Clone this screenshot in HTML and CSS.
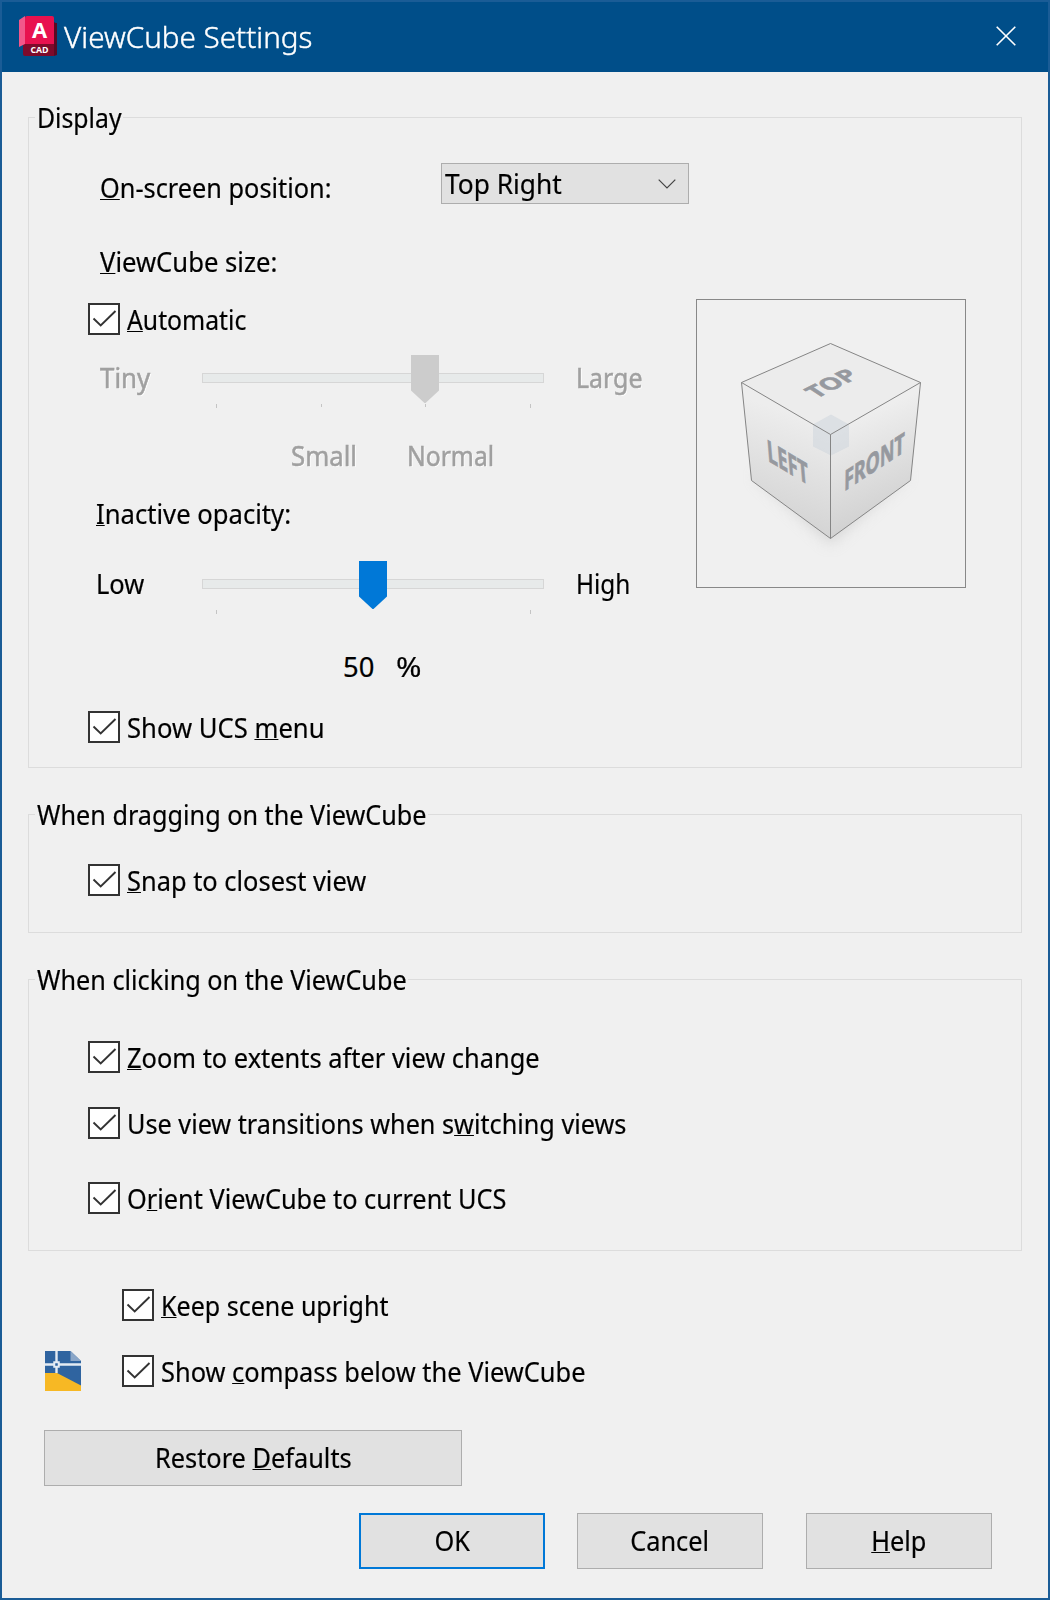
FILE: index.html
```
<!DOCTYPE html>
<html lang="en">
<head>
<meta charset="utf-8">
<title>ViewCube Settings</title>
<link rel="stylesheet" href="styles.css">
</head>
<body>
<svg width="0" height="0" class="defs"><defs>
<symbol id="tick" viewBox="0 0 28 28"><path d="M3.5 13.5 L10.7 20.5 L25.5 6" fill="none" stroke="#333" stroke-width="1.9"/></symbol>
</defs></svg>
<main class="dialog">
  <header class="titlebar">
    <svg class="logo" width="38" height="42" viewBox="0 0 38 42">
      <path d="M4 34h34V8H34L4 30z" fill="#5a0a23"/>
      <path d="M4 29h31v12H6a2 2 0 0 1-2-2z" fill="#7d0a2b"/>
      <path d="M0 5 6 1v28L0 32z" fill="#f2578b"/>
      <path d="M6 3a2 2 0 0 1 2-2h25a2 2 0 0 1 2 2v26H6z" fill="#e8114f"/>
      <path d="M35 7l3 2v31l-3 1z" fill="#5a0a23"/>
      <text x="20.5" y="23" class="logo-a">A</text>
      <text x="20.5" y="37.500" class="logo-cad">CAD</text>
    </svg>
    <h1 class="title"><span class="t title-text">ViewCube Settings</span></h1>
    <svg class="close" width="20" height="20" viewBox="0 0 20 20"><path d="M.7.7l18.6 18.6M19.3.7.7 19.3" stroke="#fff" stroke-width="1.6"/></svg>
  </header>

  <fieldset class="group display">
    <legend><span class="t display-text">Display</span></legend>
    <div class="columns">
      <div class="settings">
        <div class="row position"><label class="position-label"><span class="t"><u>O</u>n-screen position:</span></label>
          <div class="select"><span class="t top-right">Top Right</span><svg width="18" height="10" viewBox="0 0 18 10"><path d="M.7.7 9 9 17.3.7" fill="none" stroke="#444" stroke-width="1.2"/></svg></div>
        </div>
        <div class="row size-title"><span class="t vc-size"><u>V</u>iewCube size:</span></div>
        <label class="check auto"><span class="box"><svg><use href="#tick"/></svg></span><span class="t automatic"><u>A</u>utomatic</span></label>
        <div class="row slider-row disabled size-slider">
          <span class="low-label"><span class="t tiny">Tiny</span></span>
          <svg class="slider" width="342" height="54" viewBox="0 0 342 54">
            <rect x=".5" y="18.5" width="341" height="9" fill="#e7eaea" stroke="#d6d6d6"/>
            <path d="M14.5 49v4M119.5 49v3M223.5 49v3M328.5 49v4" stroke="#c4c4c4"/>
            <path d="M209 0h28v35.500L223.500 48h-1L209 35.500z" fill="#ccc"/>
          </svg>
          <span class="t large">Large</span>
        </div>
        <div class="row disabled scale"><span class="t small">Small</span><span class="t normal">Normal</span></div>
        <div class="row opacity-title"><span class="t opacity-label"><u>I</u>nactive opacity:</span></div>
        <div class="row slider-row opacity-slider">
          <span class="low-label"><span class="t low">Low</span></span>
          <svg class="slider" width="342" height="54" viewBox="0 0 342 54">
            <rect x=".5" y="18.500" width="341" height="9" fill="#e7eaea" stroke="#d6d6d6"/>
            <path d="M14.5 49v4M328.5 49v4" stroke="#c4c4c4"/>
            <path d="M157 0h28v35.500L171.500 48h-1L157 35.500z" fill="#0078d7"/>
          </svg>
          <span class="t high">High</span>
        </div>
        <div class="row value"><span class="t number">50</span><span class="t percent">%</span></div>
        <label class="check ucs"><span class="box"><svg><use href="#tick"/></svg></span><span class="t ucs-text">Show UCS <u>m</u>enu</span></label>
      </div>
      <svg class="preview" width="270" height="289" viewBox="0 0 270 289">
        <defs>
          <linearGradient id="left" x1=".6" y1="0" x2=".4" y2="1"><stop offset=".2" stop-color="#ededed"/><stop offset="1" stop-color="#d0d0d0"/></linearGradient>
          <linearGradient id="front" x1=".35" y1="0" x2=".6" y2="1"><stop offset=".2" stop-color="#eee"/><stop offset="1" stop-color="#cbcbcb"/></linearGradient>
          <filter id="soft" x="-20%" y="-20%" width="140%" height="140%"><feGaussianBlur stdDeviation="7"/></filter>
        </defs>
        <rect x=".5" y=".5" width="269" height="288" fill="#f0f0f0" stroke="#888"/>
        <path d="M58 177 134.500 246 212 177 134 150z" fill="#c8c8c8" opacity=".6" filter="url(#soft)"/>
        <path d="M134.500 44.500 224.500 83.500 134.500 135.500 45.500 83.500z" fill="#ececec"/>
        <path d="M45.500 83.500 134.500 135.500V239.500L55.500 181.500z" fill="url(#left)"/>
        <path d="M224.500 83.500 134.500 135.500V239.500L214.500 181.500z" fill="url(#front)"/>
        <path d="M135 115.500 153 125.500V147.500L135 156.500 117 147.500V125.500z" fill="#ccd3dc" opacity=".5"/>
        <g fill="none" stroke="#858585"><path d="M134.500 44.500 224.500 83.500 214.500 181.500 134.500 239.500 55.500 181.500 45.500 83.500z"/><path d="M45.500 83.500 134.500 135.500 224.500 83.500M134.500 135.500V239.500"/></g>
        <g class="face">
          <text transform="matrix(1.1 -.556 .958 .63 120.500 99.8)">TOP</text>
          <text transform="matrix(.915 .552 .128 1.51 72 161.7)">LEFT</text>
          <text transform="matrix(.897 -.587 -.02 1.4 148 192.4)">FRONT</text>
        </g>
      </svg>
    </div>
  </fieldset>

  <fieldset class="group dragging">
    <legend><span class="t">When dragging on the ViewCube</span></legend>
    <label class="check snap"><span class="box"><svg><use href="#tick"/></svg></span><span class="t"><u>S</u>nap to closest view</span></label>
  </fieldset>

  <fieldset class="group clicking">
    <legend><span class="t">When clicking on the ViewCube</span></legend>
    <label class="check zoom"><span class="box"><svg><use href="#tick"/></svg></span><span class="t"><u>Z</u>oom to extents after view change</span></label>
    <label class="check transitions"><span class="box"><svg><use href="#tick"/></svg></span><span class="t transitions-text">Use view transitions when s<u>w</u>itching views</span></label>
    <label class="check orient"><span class="box"><svg><use href="#tick"/></svg></span><span class="t orient-text">O<u>r</u>ient ViewCube to current UCS</span></label>
  </fieldset>

  <section class="extras">
    <label class="check upright"><span class="box"><svg><use href="#tick"/></svg></span><span class="t upright-text"><u>K</u>eep scene upright</span></label>
    <div class="compass-row">
      <svg class="dwg" width="36" height="40" viewBox="0 0 36 40">
        <path d="M0 0h25.500L36 10v30H0z" fill="#2f64a0"/>
        <path d="M25.500 0 36 10H25.500z" fill="#8aa6c8"/>
        <path d="M0 22h12L36 34.500V40H0z" fill="#f7b824"/>
        <path d="M11.500 0v22M0 13.500h36" stroke="#e4ebf3" stroke-width="2.400"/>
        <rect x="9.250" y="11.250" width="4.500" height="4.500" fill="#2f64a0" stroke="#e4ebf3" stroke-width="2"/>
      </svg>
      <label class="check"><span class="box"><svg><use href="#tick"/></svg></span><span class="t">Show <u>c</u>ompass below the ViewCube</span></label>
    </div>
  </section>

  <button class="btn restore"><span class="t">Restore <u>D</u>efaults</span></button>
  <footer class="actions">
    <button class="btn ok"><span class="t">OK</span></button>
    <button class="btn cancel"><span class="t">Cancel</span></button>
    <button class="btn help"><span class="t"><u>H</u>elp</span></button>
  </footer>
</main>
</body>
</html>
```
FILE: styles.css
```
* { box-sizing: border-box; }
body { margin: 0; color: #000; font: 27.4px/37px "Noto Sans", "Open Sans", sans-serif; }
.defs { position: absolute; }
.dialog { width: 1050px; height: 1600px; border: 2px solid #1a5c96; background: #f0f0f0; }

/* Labels are set slightly condensed; --k is the horizontal scale. */
.t { --k: .928; display: inline-block; white-space: nowrap; transform: scaleX(var(--k)); transform-origin: 0 50%; -webkit-text-stroke: .2px currentColor; }
u { text-underline-offset: 1px; text-decoration-thickness: 1px; text-decoration-skip-ink: none; }
.title-text { --k: 1.004; }
.display-text { --k: .905; }
.position-label .t { --k: .924; }
.top-right { --k: .96; }
.vc-size, .opacity-label, .ucs-text { --k: .936; }
.automatic { --k: .904; }
.tiny { --k: .945; }
.small { --k: .94; }
.low { --k: .93; }
.large { --k: .91; }
.normal { --k: .9; }
.high { --k: .89; }
.number { --k: 1; }
.percent { --k: 1.12; }
.dragging legend .t, .clicking legend .t { --k: .921; }
.transitions-text { --k: .921; }
.orient-text { --k: .925; }
.upright-text { --k: .914; }

.titlebar { display: flex; align-items: flex-start; height: 70px; background: #004e89; color: #fff; padding: 13px 32px 0 17px; }
.logo { flex: none; }
.logo-a { font: bold 22px "Open Sans", sans-serif; fill: #fff; text-anchor: middle; }
.logo-cad { font: bold 8.8px "Open Sans", sans-serif; fill: #fff; text-anchor: middle; }
.title { flex: 1; margin: 3px 0 0 7px; font: 300 29.5px/37px "Noto Sans", "Open Sans", sans-serif; }
.title .t { -webkit-text-stroke-width: .4px; }
.close { margin-top: 11px; }

.group { margin: 0 0 0 26px; padding: 0; border: 1px solid #dcdcdc; width: 994px; min-width: 0; }
.group legend { margin-left: 6px; padding: 0 0 0 2px; height: 37px; }
.group.display legend { width: 88px; }
.group.dragging legend { width: 393px; }
.group.clicking legend { width: 373px; }
.display { margin-top: 27px; height: 669px; }
.dragging { margin-top: 28px; height: 137px; }
.clicking { margin-top: 28px; height: 290px; }

.columns { display: flex; }
.settings { width: 667px; }
.preview { flex: none; margin-top: 163px; }
.row { display: flex; height: 37px; }
.position { margin-top: 27px; height: 41px; }
.position-label { width: 342px; margin: 6px -1px 0 71px; }
.select { display: flex; width: 248px; height: 41px; border: 1px solid #adadad; background: #e1e1e1; padding: 1px 12px 0 3px; }
.select svg { margin: 14px 0 0 auto; }
.size-title { margin: 39px 0 0 71px; }
.check { display: flex; height: 37px; padding-left: 59px; }
.box { display: block; flex: none; width: 32px; height: 32px; margin: 2px 7px 0 0; border: 2px solid #333; background: #fff; }
.box svg { display: block; width: 28px; height: 28px; }
.auto { margin-top: 21px; }
.slider-row { height: 54px; }
.low-label { flex: none; width: 102px; margin-top: 4px; }
.size-slider { margin: 17px 0 0 71px; }
.slider { flex: none; margin-right: 32px; }
.large, .high { margin-top: 4px; height: 37px; }
.disabled { color: #a0a0a0; text-shadow: 1px 1px 0 #fff; }
.disabled .t { -webkit-text-stroke-width: .5px; }
.scale { margin: 28px 0 0 262px; gap: 46px; }
.opacity-title { margin: 21px 0 0 67px; }
.opacity-slider { margin: 29px 0 0 67px; }
.opacity-slider .low-label { width: 106px; }
.value { margin: 33px 0 0 314px; gap: 22px; }
.ucs { margin-top: 24px; }
.snap { margin-top: 29px; }
.zoom { margin-top: 41px; }
.transitions { margin-top: 29px; }
.orient { margin-top: 38px; }

.extras { margin: 36px 0 0 41px; }
.extras .check { padding-left: 79px; }
.compass-row { display: flex; margin-top: 29px; }
.compass-row .check { padding-left: 41px; }
.dwg { flex: none; margin: -2px 0 0 2px; }

.btn { display: block; height: 56px; margin: 0; padding: 0 0 2px; border: 1px solid #adadad; background: #e1e1e1; color: #000; font: inherit; text-align: center; }
.btn .t { --k: .925; transform-origin: 50% 50%; }
.restore { width: 418px; margin: 39px 0 0 42px; }
.actions { display: flex; margin: 27px 0 0 357px; }
.actions .btn { width: 186px; }
.actions .ok { border: 2px solid #0078d7; }
.cancel { margin-left: 32px; }
.help { margin-left: 43px; }

.face { font: bold 20px "Noto Sans", "Open Sans", sans-serif; fill: #96999f; stroke: #96999f; stroke-width: .5px; }
```
